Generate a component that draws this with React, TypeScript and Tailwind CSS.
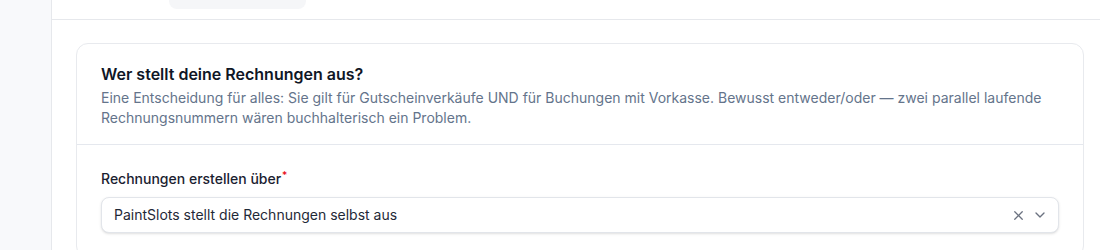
import { X, ChevronDown } from "lucide-react";

export default function App() {
  return (
    <div
      className="flex h-[250px] w-[1100px] overflow-hidden bg-white"
      style={{ fontFamily: "Inter, 'Noto Sans', sans-serif" }}
    >
      <aside className="w-[52px] shrink-0 border-r border-[#e6e8ec] bg-[#f8f9fb]" />

      <main className="flex min-w-0 flex-1 flex-col">
        <div className="h-5 shrink-0 border-b border-[#e6e8ec]">
          <div className="ml-[117px] h-[9px] w-[137px] rounded-b-lg bg-[#f5f6f8]" />
        </div>

        <div className="pl-6 pr-4 pt-[23px]">
          <section className="rounded-xl border border-[#e8eaee] bg-white">
            <header className="border-b border-[#e5e8ee] px-6 pb-4 pt-[18px]">
              <h2 className="text-base font-semibold leading-6 text-[#0f1626]">
                Wer stellt deine Rechnungen aus?
              </h2>
              <p className="mt-[2px] text-sm leading-5 text-[#64748b]">
                Eine Entscheidung für alles: Sie gilt für Gutscheinverkäufe UND für Buchungen mit
                Vorkasse. Bewusst entweder/oder — zwei parallel laufende Rechnungsnummern wären
                buchhalterisch ein Problem.
              </p>
            </header>

            <div className="px-6 pb-6 pt-6">
              <label className="block text-sm font-medium leading-5 text-[#1a2130]">
                Rechnungen erstellen über
                <span className="relative -top-[5px] ml-px text-[10px] leading-none text-red-600">*</span>
              </label>
              <div className="mt-2 flex h-9 items-center rounded-lg border border-[#e2e5ea] bg-white pl-3 pr-[10px] shadow-sm">
                <span className="flex-1 text-sm text-[#1f2937]">
                  PaintSlots stellt die Rechnungen selbst aus
                </span>
                <X className="h-[15px] w-[15px] text-[#6b7280]" strokeWidth={2} />
                <ChevronDown className="ml-[6px] h-4 w-4 text-[#6b7280]" strokeWidth={2} />
              </div>
            </div>
          </section>
        </div>
      </main>
    </div>
  );
}
